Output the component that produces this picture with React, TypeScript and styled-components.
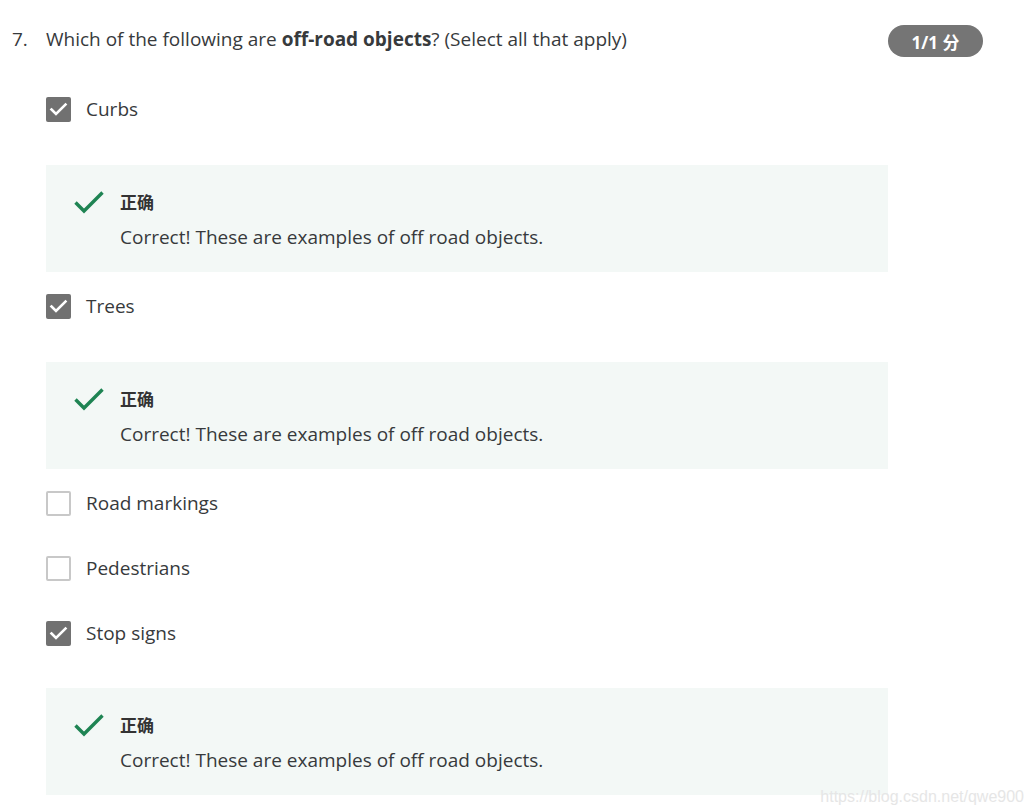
import React from "react";
import styled, { createGlobalStyle } from "styled-components";

const Global = createGlobalStyle`
  html, body { margin: 0; padding: 0; background: #ffffff; }
  body { font-family: "Open Sans", "Noto Sans CJK SC", sans-serif; color: #373a3c; }
`;

const Page = styled.div`
  width: 1034px;
  height: 811px;
  overflow: hidden;
  position: relative;
  background: #fff;
`;

const Header = styled.div`
  display: flex;
  align-items: flex-start;
  padding: 26px 51px 0 12px;
  height: 58px;
  box-sizing: border-box;
`;

const Number = styled.div`
  width: 34px;
  font-size: 19px;
  line-height: 26px;
`;

const Question = styled.div`
  flex: 1;
  font-size: 19px;
  line-height: 26px;
  b { font-weight: 700; }
`;

const Badge = styled.div`
  margin-top: -1px;
  width: 95px;
  height: 32px;
  border-radius: 16px;
  background: #757575;
  color: #fff;
  font-weight: 700;
  font-size: 17px;
  display: flex;
  align-items: center;
  justify-content: center;
  font-family: "Open Sans", "Noto Sans CJK SC", sans-serif;
`;

const Options = styled.div`
  padding-left: 46px;
  width: 842px;
`;

const OptionRow = styled.div<{ $gap: number }>`
  display: flex;
  align-items: center;
  height: 40px;
  margin-top: ${(p) => p.$gap}px;
`;

const Box = styled.span<{ $checked: boolean }>`
  width: 25px;
  height: 25px;
  box-sizing: border-box;
  border-radius: 2px;
  display: flex;
  align-items: center;
  justify-content: center;
  margin-right: 15px;
  background: ${(p) => (p.$checked ? "#717171" : "#fff")};
  border: ${(p) => (p.$checked ? "none" : "2px solid #c8c8c8")};
`;

const Label = styled.span`
  font-size: 19px;
  line-height: 26px;
`;

const Feedback = styled.div<{ $gap: number }>`
  margin-top: ${(p) => p.$gap}px;
  height: 107px;
  background: #f3f8f6;
  display: flex;
  padding: 25px 0 0 28px;
  box-sizing: border-box;
`;

const FbIcon = styled.div`
  width: 46px;
  padding-top: 1px;
`;

const FbText = styled.div`
  display: flex;
  flex-direction: column;
`;

const FbTitle = styled.div`
  font-family: "Noto Sans CJK SC", sans-serif;
  font-weight: 700;
  font-size: 17px;
  line-height: 24px;
  color: #333;
`;

const FbBody = styled.div`
  margin-top: 10px;
  font-size: 19px;
  line-height: 26px;
`;

const Watermark = styled.div`
  position: absolute;
  right: 10px;
  bottom: 5px;
  font-family: "Liberation Sans", Arial, sans-serif;
  font-size: 16px;
  color: #e6e6e6;
`;

const Tick = () => (
  <svg width="19" height="15" viewBox="0 0 19 15">
    <path d="M2.5 7.5 L7 12 L16.5 2.5" fill="none" stroke="#fff" strokeWidth="2.6" strokeLinecap="square" />
  </svg>
);

const GreenCheck = () => (
  <svg width="30" height="23" viewBox="0 0 30 23">
    <path d="M1.5 11.5 L10 20 L28.5 1.5" fill="none" stroke="#1e8453" strokeWidth="3.4" />
  </svg>
);

type Opt = { label: string; checked: boolean; fb: boolean; gap: number; fbGap: number };

const opts: Opt[] = [
  { label: "Curbs", checked: true, fb: true, gap: 31, fbGap: 36 },
  { label: "Trees", checked: true, fb: true, gap: 14, fbGap: 36 },
  { label: "Road markings", checked: false, fb: false, gap: 14, fbGap: 0 },
  { label: "Pedestrians", checked: false, fb: false, gap: 25, fbGap: 0 },
  { label: "Stop signs", checked: true, fb: true, gap: 25, fbGap: 35 },
];

export default function App() {
  return (
    <Page>
      <Global />
      <Header>
        <Number>7.</Number>
        <Question>
          Which of the following are <b>off-road objects</b>? (Select all that apply)
        </Question>
        <Badge>1/1 分</Badge>
      </Header>
      <Options>
        {opts.map((o) => (
          <React.Fragment key={o.label}>
            <OptionRow $gap={o.gap}>
              <Box $checked={o.checked}>{o.checked && <Tick />}</Box>
              <Label>{o.label}</Label>
            </OptionRow>
            {o.fb && (
              <Feedback $gap={o.fbGap}>
                <FbIcon>
                  <GreenCheck />
                </FbIcon>
                <FbText>
                  <FbTitle>正确</FbTitle>
                  <FbBody>Correct! These are examples of off road objects.</FbBody>
                </FbText>
              </Feedback>
            )}
          </React.Fragment>
        ))}
      </Options>
      <Watermark>https://blog.csdn.net/qwe900</Watermark>
    </Page>
  );
}
